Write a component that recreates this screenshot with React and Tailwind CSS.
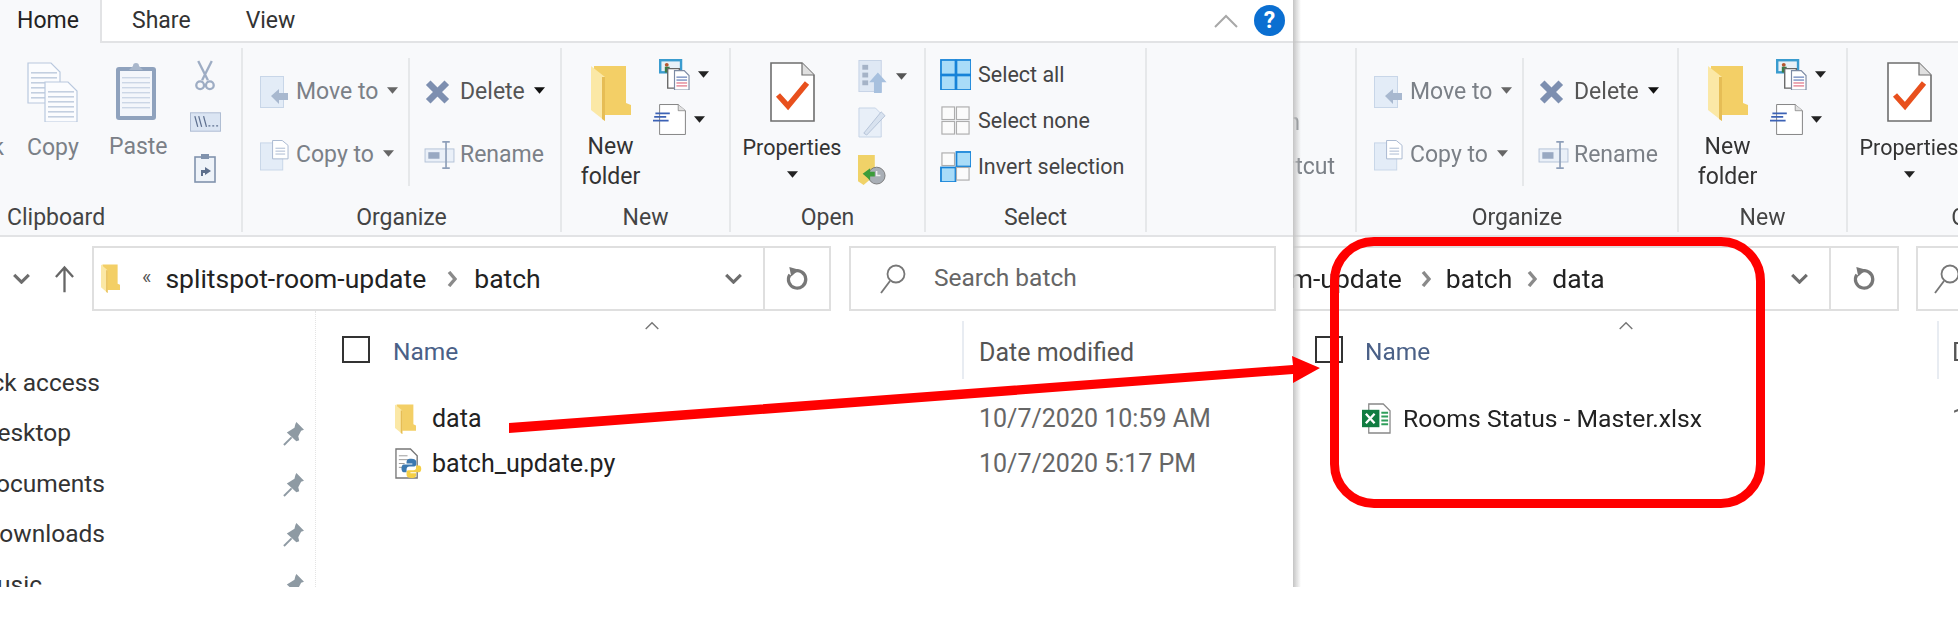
const Caret = ({ color = "#222", className = "" }) => (
  <svg viewBox="0 0 12 7" className={`w-[11px] h-[7px] shrink-0 ${className}`}>
    <polygon points="0,0 12,0 6,7" fill={color} />
  </svg>
);

const Folder = ({ className }) => (
  <svg viewBox="0 0 40 56" preserveAspectRatio="none" className={className}>
    <path d="M3 1H35V38L40 40V50H12V42H3Z" fill="#f3cf66" />
    <path d="M0 1L14 12V56L0 45Z" fill="#fbe8a6" />
    <path d="M14 12V56L11 54V12Z" fill="#e6bd55" />
  </svg>
);

const Doc = ({ className, children, stroke = "#8a8a8a", fill = "#fff" }) => (
  <svg viewBox="0 0 45 60" preserveAspectRatio="none" className={`overflow-visible ${className}`}>
    <path d="M1 1H32L44 13V59H1Z" fill={fill} stroke={stroke} strokeWidth="1.6" />
    <path d="M32 1V13H44" fill="#e0e0e0" stroke={stroke} strokeWidth="1.2" />
    {children}
  </svg>
);

const CopyIcon = () => (
  <svg viewBox="0 0 51 60" className="w-[51px] h-[60px]">
    {[0, 17].map((o) => (
      <g key={o} transform={`translate(${o} ${o === 0 ? 0 : 19})`}>
        <path d="M1 1H24L33 10V41H1Z" fill="#fbfcfe" stroke="#b9c8de" strokeWidth="1.2" />
        {[10, 15, 20, 25, 30, 35].map((y) => (
          <rect key={y} x="4" y={y} width="26" height="1.6" fill="#c3cfe0" />
        ))}
      </g>
    ))}
  </svg>
);

const PasteIcon = () => (
  <svg viewBox="0 0 42 60" className="w-[42px] h-[60px]">
    <rect x="1" y="6" width="40" height="53" rx="3" fill="#8fa2bd" />
    <rect x="5" y="10" width="32" height="45" fill="#f3f6fb" />
    {[16, 21, 26, 31, 36, 41, 46].map((y) => (
      <rect key={y} x="7" y={y} width="28" height="1.4" fill="#cbd6e6" />
    ))}
    <path d="M14 9L18 5A3 3 0 0 1 24 5L28 9Z" fill="#a9b7cb" />
  </svg>
);

const Scissors = () => (
  <svg viewBox="0 0 22 32" className="w-[22px] h-[31px]" fill="none" stroke="#9eadc4" strokeWidth="2.4">
    <path d="M4 1L14 21M18 1L8 21" />
    <circle cx="6" cy="26" r="4" />
    <circle cx="16" cy="26" r="4" />
  </svg>
);

const CopyPathIcon = () => (
  <svg viewBox="0 0 32 20" className="w-[31px] h-[20px]">
    <rect x="0.5" y="0.5" width="31" height="19" fill="#dbe5f3" stroke="#aebcd2" />
    <path d="M5 4L8 15M9 4L12 15M14 4L17 15" stroke="#5f7190" strokeWidth="1.3" />
    <path d="M19 14h2M23 14h2M27 14h2" stroke="#5f7190" strokeWidth="1.5" />
  </svg>
);

const PasteShortcutIcon = () => (
  <svg viewBox="0 0 22 30" className="w-[22px] h-[30px]">
    <rect x="1" y="4" width="20" height="25" fill="#eef3f9" stroke="#8193ad" strokeWidth="1.6" />
    <rect x="7" y="1" width="8" height="5" fill="#8193ad" />
    <path d="M7 23V17H11V14L17 18L11 22V20H9V23Z" fill="#5c6f8c" />
  </svg>
);

const MoveIcon = () => (
  <svg viewBox="0 0 28 32" className="w-[28px] h-[32px]">
    <rect x="0.5" y="0.5" width="23" height="31" fill="#e3ecf7" stroke="#c8d6e8" />
    <path d="M11 20L19 13V17H28V24H19V28Z" fill="#a8b8cf" />
  </svg>
);

const CopyToIcon = () => (
  <svg viewBox="0 0 30 32" className="w-[29px] h-[32px]">
    <rect x="0.5" y="3.5" width="23" height="28" fill="#e3ecf7" stroke="#c8d6e8" />
    <path d="M13 1H23L29 6V20H13Z" fill="#fff" stroke="#a9b9d0" />
    <path d="M16 9H26M16 12H26M16 15H26" stroke="#a9b9d0" />
  </svg>
);

const DeleteIcon = () => (
  <svg viewBox="0 0 28 28" className="w-[27px] h-[26px]">
    <path d="M4 4L24 24M24 4L4 24" stroke="#7d8fb0" strokeWidth="7" />
  </svg>
);

const RenameIcon = () => (
  <svg viewBox="0 0 32 30" className="w-[31px] h-[28px]">
    <rect x="0.5" y="8.5" width="31" height="14" fill="#eaf0f8" stroke="#b3c1d6" />
    <rect x="4" y="12" width="12" height="7" fill="#99a9c2" />
    <path d="M23 2V28M19 1H27M19 29H27" stroke="#8e9fb9" strokeWidth="1.8" fill="none" />
  </svg>
);

const NewItemIcon = () => (
  <svg viewBox="0 0 32 32" className="w-[31px] h-[31px]">
    <rect x="0" y="0" width="24" height="15" fill="#3a9ccf" />
    <rect x="2.5" y="2.5" width="19" height="10" fill="#e8f1f7" />
    <circle cx="8" cy="6" r="2" fill="#b4572f" />
    <rect x="6" y="8" width="5" height="6" fill="#3b7a48" />
    <path d="M9 10H21V30H9Z" fill="#fff" stroke="#666" strokeWidth="1.4" />
    <path d="M16 12H26L31 17V32H16Z" fill="#fff" stroke="#7c8aa3" strokeWidth="1.2" />
    {[18, 21, 24, 27].map((y) => (
      <rect key={y} x="18" y={y} width="11" height="1.5" fill={y > 21 ? "#e58a9a" : "#7f95c5"} />
    ))}
  </svg>
);

const EasyAccessIcon = () => (
  <Doc className="w-[27px] h-[31px]" stroke="#777">
    <path d="M-6 18H18M-8 25H12M-10 32H16" stroke="#3c62b5" strokeWidth="3.4" />
  </Doc>
);

const PropertiesIcon = () => (
  <Doc className="w-[45px] h-[60px]" stroke="#6e6e6e">
    <path d="M8 33L18 44L37 21" fill="none" stroke="#e8501d" strokeWidth="5.5" />
  </Doc>
);

const OpenIcon = () => (
  <svg viewBox="0 0 30 34" className="w-[30px] h-[33px]">
    <rect x="0.5" y="0.5" width="23" height="32" fill="#dfe8f4" stroke="#c6d3e6" />
    {[5, 13, 21].map((y) => (
      <rect key={y} x="4" y={y} width="6" height="5" fill="#a5b3c7" />
    ))}
    <path d="M20 13L29 23H24V34H16V23H11Z" fill="#a7c0de" />
  </svg>
);

const EditIcon = () => (
  <svg viewBox="0 0 30 32" className="w-[29px] h-[31px]">
    <path d="M1 1H18L24 7V31H1Z" fill="#e8eff8" stroke="#c6d3e6" />
    <path d="M6 27L24 5L28 9L9 29Z" fill="#d8e2ef" stroke="#b4c3d8" />
  </svg>
);

const HistoryIcon = () => (
  <svg viewBox="0 0 30 32" className="w-[28px] h-[30px]">
    <path d="M0 0H18V22L6 32L0 28Z" fill="#f0d268" />
    <circle cx="20" cy="22" r="9" fill="#a9afb6" stroke="#777" />
    <path d="M20 17V22H24" stroke="#eee" strokeWidth="1.6" fill="none" />
    <path d="M5 20L13 14V18H18V23H13V27Z" fill="#3c9c3a" />
  </svg>
);

const SelectIcon = ({ cells }) => (
  <svg viewBox="0 0 32 32" className="w-[31px] h-[31px] shrink-0">
    {cells.map((on, i) => (
      <rect
        key={i}
        x={i % 2 === 0 ? (on ? 1 : 2) : 17}
        y={i < 2 ? (on ? 1 : 2) : 17}
        width={on ? 15 : 13}
        height={on ? 15 : 13}
        fill={on ? "#a9dcf8" : "#fbfbfb"}
        stroke={on ? "#1683d8" : "#adadad"}
        strokeWidth={on ? 1.8 : 1.2}
      />
    ))}
  </svg>
);

const Pin = () => (
  <svg viewBox="0 0 22 26" className="w-[21px] h-[25px]">
    <path d="M14 1L22 9L19 10L16 16L17 20L14 21L4 12L7 10L12 7L13 3Z" fill="#8e9aa3" />
    <path d="M9 17L1 25" stroke="#8e9aa3" strokeWidth="2" />
  </svg>
);

const Chevron = ({ className = "" }) => (
  <svg viewBox="0 0 18 12" className={`w-[17px] h-[11px] ${className}`} fill="none" stroke="#6d6d6d" strokeWidth="3.4">
    <path d="M1 2L9 10L17 2" />
  </svg>
);

const Crumb = () => (
  <svg viewBox="0 0 10 16" className="w-[10px] h-[16px] shrink-0" fill="none" stroke="#8a8a8a" strokeWidth="3.4">
    <path d="M2 1L8 8L2 15" />
  </svg>
);

const Refresh = () => (
  <svg viewBox="0 0 24 26" className="w-[24px] h-[25px]" fill="none" stroke="#777" strokeWidth="3.4">
    <path d="M9 5.5A9 9 0 1 1 4.6 9" />
    <path d="M4 1L14 4L6 11Z" fill="#777" stroke="none" />
  </svg>
);

const SortUp = () => (
  <svg viewBox="0 0 16 10" className="absolute top-0 left-1/2 -translate-x-1/2 w-[16px] h-[9px]" fill="none" stroke="#777" strokeWidth="1.6">
    <path d="M1 9L8 2L15 9" />
  </svg>
);

const Group = ({ className, label, children }) => (
  <div className={`h-[184px] mt-[5px] border-r-2 border-[#e6e8ea] flex flex-col shrink-0 ${className}`}>
    <div className="h-[156px] flex">{children}</div>
    <div className="h-[28px] leading-[28px] text-center text-[#444] whitespace-nowrap">{label}</div>
  </div>
);

const Cmd = ({ icon, label, caret, muted, className = "" }) => (
  <div className={`flex items-center h-[40px] ${className}`}>
    <div className="w-[36px] shrink-0">{icon}</div>
    <span className={muted ? "text-[#7b8087]" : "text-[#555]"}>{label}</span>
    {caret && <Caret className="ml-[9px] -mt-[4px]" color={muted ? "#666" : "#111"} />}
  </div>
);

const OrganizeBody = () => (
  <>
    <div className="w-[165px] pl-[17px] pt-[24px] flex flex-col gap-[23px] shrink-0">
      <Cmd icon={<MoveIcon />} label="Move to" caret muted />
      <Cmd icon={<CopyToIcon />} label="Copy to" caret muted />
    </div>
    <div className="h-[128px] mt-[10px] border-l-2 border-[#e6e8ea] pl-[14px] pt-[14px] flex flex-col gap-[23px]">
      <Cmd icon={<DeleteIcon />} label="Delete" caret />
      <Cmd icon={<RenameIcon />} label="Rename" muted />
    </div>
  </>
);

const NewBody = () => (
  <>
    <div className="w-[97px] pt-[17px] flex flex-col items-center shrink-0">
      <Folder className="w-[40px] h-[56px]" />
      <div className="mt-[11px] text-center leading-[30px] text-[#333]">
        New
        <br />
        folder
      </div>
    </div>
    <div className="pt-[11px] flex flex-col gap-[14px]">
      <div className="flex items-center gap-[8px]"><NewItemIcon /><Caret /></div>
      <div className="flex items-center gap-[8px]"><EasyAccessIcon /><Caret /></div>
    </div>
  </>
);

const OpenBody = () => (
  <>
    <div className="w-[122px] pt-[14px] flex flex-col items-center shrink-0">
      <PropertiesIcon />
      <div className="mt-[12px] leading-[28px] text-[#333] text-[21.5px]">Properties</div>
      <Caret className="mt-[9px]" />
    </div>
    <div className="pt-[12px] pl-[5px] flex flex-col gap-[14px]">
      <div className="flex items-center gap-[8px]"><OpenIcon /><Caret color="#555" /></div>
      <EditIcon />
      <div className="mt-[3px]"><HistoryIcon /></div>
    </div>
  </>
);

const LeftRibbon = () => (
  <div className="h-[194px] bg-[#f8f9fb] border-b-2 border-[#e2e3e5] flex">
    <Group className="w-[243px]" label={<div className="text-left pl-[7px]">Clipboard</div>}>
      <div className="flex">
        <div className="w-[4px] pt-[86px] flex justify-end text-[#7b8087] leading-[28px] whitespace-nowrap">Pin to Quick</div>
        <div className="pl-[23px] pt-[14px] w-[105px] shrink-0 text-[#7b8087]">
          <CopyIcon />
          <div className="mt-[12px] leading-[28px]">Copy</div>
        </div>
        <div className="pl-[6px] pt-[13px] w-[80px] shrink-0 text-[#7b8087]">
          <PasteIcon />
          <div className="mt-[12px] -ml-[6px] leading-[28px]">Paste</div>
        </div>
        <div className="pt-[12px] flex flex-col items-center gap-[21px] w-[32px]">
          <Scissors />
          <CopyPathIcon />
          <PasteShortcutIcon />
        </div>
      </div>
    </Group>
    <Group className="w-[319px]" label="Organize"><OrganizeBody /></Group>
    <Group className="w-[169px]" label="New"><NewBody /></Group>
    <Group className="w-[195px]" label="Open"><OpenBody /></Group>
    <Group className="w-[221px]" label="Select">
      <div className="pl-[14px] pt-[11px] flex flex-col gap-[15px] text-[21.5px] leading-[31px] text-[#444]">
        <div className="flex items-center gap-[7px]"><SelectIcon cells={[1, 1, 1, 1]} />Select all</div>
        <div className="flex items-center gap-[7px]"><SelectIcon cells={[0, 0, 0, 0]} />Select none</div>
        <div className="flex items-center gap-[7px]"><SelectIcon cells={[0, 1, 1, 0]} />Invert selection</div>
      </div>
    </Group>
  </div>
);

const RightRibbon = () => (
  <div className="h-[194px] bg-[#f8f9fb] border-b-2 border-[#e2e3e5] flex">
    <div className="w-[64px] h-[184px] mt-[5px] border-r-2 border-[#e6e8ea] shrink-0 flex flex-col items-end pr-[20px] pt-[61px] gap-[16px] text-[#7b8087] leading-[28px] whitespace-nowrap">
      <div className="mr-[35px]">Copy path</div>
      <div>Paste shortcut</div>
    </div>
    <Group className="w-[322px]" label="Organize"><OrganizeBody /></Group>
    <Group className="w-[169px]" label="New"><NewBody /></Group>
    <Group className="w-[262px]" label="Open"><OpenBody /></Group>
  </div>
);

const Column = ({ width, pad }) => (
  <div className={`relative h-[58px] mt-[10px] border-r-2 border-[#e8ecf2] flex items-center shrink-0 ${width}`}>
    <SortUp />
    <div className="w-[28px] h-[27px] border-2 border-[#333] shrink-0 -mt-[1px]" />
    <div className={`text-[#4a6087] text-[24.5px] mt-[5px] ${pad}`}>Name</div>
  </div>
);

const navItems = ["Quick access", "Desktop", "Documents", "Downloads", "Music"];

export default function App() {
  return (
    <div className="relative w-[1958px] h-[617px] bg-white overflow-hidden font-['Roboto',sans-serif] text-[23px]">
      <div className="flex h-[587px] blur-[0.6px]">
        {/* left window */}
        <div className="w-[1293px] shrink-0 h-full overflow-hidden flex flex-col bg-white">
          <div className="h-[43px] flex items-stretch border-b-2 border-[#e2e3e5] shrink-0">
            <div className="w-[102px] bg-[#f8f9fb] border-r-2 border-[#e2e3e5] pl-[17px] leading-[41px] text-[#222] -mb-[2px]">Home</div>
            <div className="pl-[30px] leading-[41px] text-[#333]">Share</div>
            <div className="pl-[55px] leading-[41px] text-[#333]">View</div>
            <div className="ml-auto flex items-center pr-[8px]">
              <svg viewBox="0 0 24 14" className="w-[24px] h-[14px] mr-[16px]" fill="none" stroke="#a8a8a8" strokeWidth="2">
                <path d="M1 13L12 2L23 13" />
              </svg>
              <div className="w-[31px] h-[31px] rounded-full bg-[#0b6fd1] text-white font-bold text-center leading-[31px]">?</div>
            </div>
          </div>
          <LeftRibbon />
          <div className="h-[65px] mt-[9px] flex shrink-0">
            <div className="w-[92px] flex items-center pl-[13px] gap-[24px] shrink-0">
              <Chevron />
              <svg viewBox="0 0 22 28" className="w-[21px] h-[28px]" fill="none" stroke="#666" strokeWidth="2.4">
                <path d="M11 28V3M2 12L11 2L20 12" />
              </svg>
            </div>
            <div className="w-[739px] border-2 border-[#dfdfdf] flex items-center shrink-0 text-[26.5px]">
              <Folder className="w-[19px] h-[29px] ml-[7px] shrink-0" />
              <span className="ml-[22px] text-[#555] text-[20px] -mt-[4px]">«</span>
              <span className="ml-[14px] text-[#222] whitespace-nowrap">splitspot-room-update</span>
              <span className="ml-[21px]"><Crumb /></span>
              <span className="ml-[17px] text-[#222]">batch</span>
              <div className="ml-auto w-[66px] h-full border-l-2 border-[#dfdfdf] flex items-center justify-center relative">
                <div className="absolute -left-[40px]"><Chevron /></div>
                <Refresh />
              </div>
            </div>
            <div className="ml-[18px] w-[427px] border-2 border-[#dfdfdf] flex items-center shrink-0 text-[#666] text-[24.5px]">
              <svg viewBox="0 0 26 30" className="w-[26px] h-[30px] ml-[29px]" fill="none" stroke="#777" strokeWidth="1.8">
                <circle cx="16" cy="10" r="8.5" />
                <path d="M10 17L1 29" />
              </svg>
              <span className="ml-[28px]">Search batch</span>
            </div>
          </div>
          <div className="flex flex-1 min-h-0 text-[25px]">
            <div className="w-[316px] shrink-0 border-r border-dotted border-[#e4e4e4] pt-[47px] overflow-hidden text-[24.5px]">
              {navItems.map((item, i) => (
                <div key={item} className="h-[50.5px] flex items-center">
                  <div className={`flex justify-end whitespace-nowrap text-[#333] ${i === 0 ? "w-[100px]" : i === 1 ? "w-[71px]" : i === 4 ? "w-[42px]" : "w-[105px]"}`}>
                    {item}
                  </div>
                  <div className={`${i === 0 ? "hidden" : ""} ${i === 1 ? "ml-[212px]" : i === 4 ? "ml-[241px]" : "ml-[178px]"}`}>
                    <Pin />
                  </div>
                </div>
              ))}
            </div>
            <div className="flex-1 pl-[26px]">
              <div className="flex">
                <Column width="w-[622px]" pad="ml-[23px]" />
                <div className="pl-[15px] pt-[23px] text-[#555] whitespace-nowrap">Date modified</div>
              </div>
              <div className="mt-[17px] h-[45px] flex items-center">
                <div className="w-[622px] pl-[53px] flex items-center shrink-0">
                  <Folder className="w-[21px] h-[30px]" />
                  <span className="ml-[16px] text-[#222]">data</span>
                </div>
                <span className="pl-[15px] text-[#666] whitespace-nowrap">10/7/2020 10:59 AM</span>
              </div>
              <div className="h-[45px] flex items-center">
                <div className="w-[622px] pl-[53px] flex items-center shrink-0">
                  <svg viewBox="0 0 28 32" className="w-[27px] h-[31px]">
                    <path d="M1 1H16L23 8V31H1Z" fill="#fff" stroke="#777" strokeWidth="1.4" />
                    <path d="M4 8H13M4 12H18M4 16H10M4 20H8" stroke="#999" />
                    <path d="M17 11C12 11 12 13 12 16H18V17H9C6 17 6 25 9 25H12V22C12 20 13 19 15 19H20C22 19 22 17 22 16V14C22 12 20 11 17 11Z" fill="#3b78b0" />
                    <path d="M17 31C22 31 22 29 22 26H16V25H25C28 25 28 18 25 18H22V20C22 22 21 23 19 23H14C12 23 12 25 12 26V28C12 30 14 31 17 31Z" fill="#f5cf45" />
                  </svg>
                  <span className="ml-[10px] text-[#222]">batch_update.py</span>
                </div>
                <span className="pl-[15px] text-[#666] whitespace-nowrap">10/7/2020 5:17 PM</span>
              </div>
            </div>
          </div>
        </div>

        {/* right window */}
        <div className="relative flex-1 min-w-0 h-full overflow-hidden flex flex-col">
          <div className="absolute left-0 top-0 bottom-0 w-[8px] bg-gradient-to-r from-[#c4c4c4] to-transparent z-10" />
          <div className="h-[43px] border-b-2 border-[#e2e3e5] shrink-0" />
          <RightRibbon />
          <div className="h-[65px] mt-[9px] flex shrink-0">
            <div className="w-[606px] border-y-2 border-r-2 border-[#dfdfdf] flex items-center shrink-0 overflow-hidden text-[26.5px]">
              <div className="flex items-center -ml-[152px] shrink-0">
                <span className="text-[#222] whitespace-nowrap">splitspot-room-update</span>
                <span className="ml-[19px]"><Crumb /></span>
                <span className="ml-[15px] text-[#222]">batch</span>
                <span className="ml-[15px]"><Crumb /></span>
                <span className="ml-[15px] text-[#222]">data</span>
              </div>
              <div className="ml-auto w-[68px] h-full border-l-2 border-[#dfdfdf] flex items-center justify-center relative shrink-0">
                <div className="absolute -left-[40px]"><Chevron /></div>
                <Refresh />
              </div>
            </div>
            <div className="ml-[17px] flex-1 border-y-2 border-l-2 border-[#dfdfdf] flex items-center pl-[16px]">
              <svg viewBox="0 0 26 30" className="w-[26px] h-[30px] shrink-0" fill="none" stroke="#777" strokeWidth="1.8">
                <circle cx="16" cy="10" r="8.5" />
                <path d="M10 17L1 29" />
              </svg>
            </div>
          </div>
          <div className="pl-[22px] text-[25px]">
            <div className="flex">
              <Column width="w-[624px]" pad="ml-[22px]" />
              <div className="pl-[13px] pt-[23px] text-[#555] whitespace-nowrap">Date modified</div>
            </div>
            <div className="mt-[17px] h-[45px] flex items-center">
              <div className="w-[624px] pl-[47px] flex items-center shrink-0">
                <svg viewBox="0 0 30 32" className="w-[29px] h-[31px]">
                  <path d="M7 1H22L29 8V31H7Z" fill="#fff" stroke="#888" strokeWidth="1.3" />
                  <path d="M20 10H27M20 14H27M20 18H27M20 22H27" stroke="#2f9e5b" strokeWidth="2" />
                  <rect x="0" y="7" width="18" height="18" fill="#107c41" />
                  <path d="M4 11L13 21M13 11L4 21" stroke="#fff" strokeWidth="2.4" />
                </svg>
                <span className="ml-[12px] text-[#222] text-[24.7px] whitespace-nowrap">Rooms Status - Master.xlsx</span>
              </div>
              <span className="pl-[13px] text-[#666] whitespace-nowrap">10/7/2020 3:25 PM</span>
            </div>
          </div>
        </div>
      </div>

      {/* red annotations */}
      <svg viewBox="0 0 1958 617" className="absolute inset-0 w-[1958px] h-[617px] z-20 pointer-events-none">
        <polygon points="509,423 1293,365 1292,356 1320,368 1293,383 1293,374 509,433" fill="#ff0000" />
      </svg>
      <div className="absolute left-[1330px] top-[237px] w-[435px] h-[271px] border-[9px] border-[#ff0000] rounded-[44px] z-20" />
    </div>
  );
}
